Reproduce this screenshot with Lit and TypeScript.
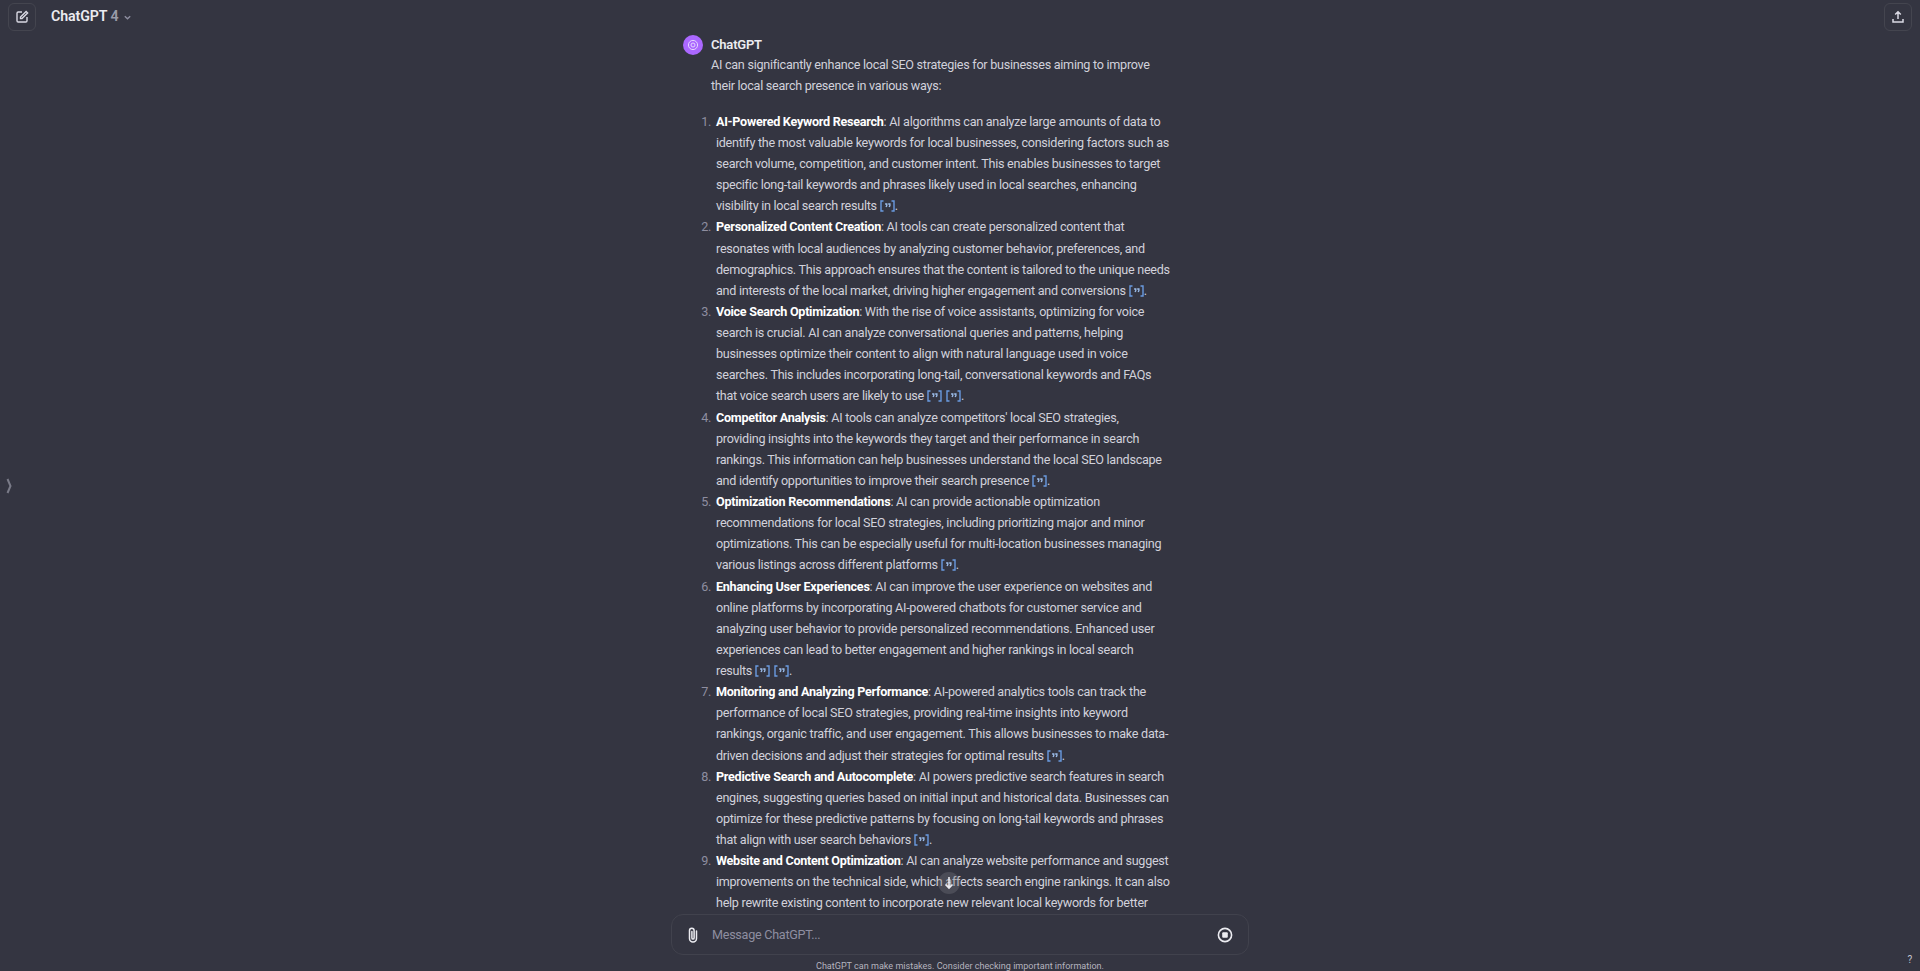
import { LitElement, html, css, svg } from "lit";
import { customElement } from "lit/decorators.js";

type Item = { title: string; first: string; lines: string[]; cites: number };

const ITEMS: Item[] = [
  { title: "AI-Powered Keyword Research", first: ": AI algorithms can analyze large amounts of data to", cites: 1, lines: [
    "identify the most valuable keywords for local businesses, considering factors such as",
    "search volume, competition, and customer intent. This enables businesses to target",
    "specific long-tail keywords and phrases likely used in local searches, enhancing",
    "visibility in local search results" ] },
  { title: "Personalized Content Creation", first: ": AI tools can create personalized content that", cites: 1, lines: [
    "resonates with local audiences by analyzing customer behavior, preferences, and",
    "demographics. This approach ensures that the content is tailored to the unique needs",
    "and interests of the local market, driving higher engagement and conversions" ] },
  { title: "Voice Search Optimization", first: ": With the rise of voice assistants, optimizing for voice", cites: 2, lines: [
    "search is crucial. AI can analyze conversational queries and patterns, helping",
    "businesses optimize their content to align with natural language used in voice",
    "searches. This includes incorporating long-tail, conversational keywords and FAQs",
    "that voice search users are likely to use" ] },
  { title: "Competitor Analysis", first: ": AI tools can analyze competitors' local SEO strategies,", cites: 1, lines: [
    "providing insights into the keywords they target and their performance in search",
    "rankings. This information can help businesses understand the local SEO landscape",
    "and identify opportunities to improve their search presence" ] },
  { title: "Optimization Recommendations", first: ": AI can provide actionable optimization", cites: 1, lines: [
    "recommendations for local SEO strategies, including prioritizing major and minor",
    "optimizations. This can be especially useful for multi-location businesses managing",
    "various listings across different platforms" ] },
  { title: "Enhancing User Experiences", first: ": AI can improve the user experience on websites and", cites: 2, lines: [
    "online platforms by incorporating AI-powered chatbots for customer service and",
    "analyzing user behavior to provide personalized recommendations. Enhanced user",
    "experiences can lead to better engagement and higher rankings in local search",
    "results" ] },
  { title: "Monitoring and Analyzing Performance", first: ": AI-powered analytics tools can track the", cites: 1, lines: [
    "performance of local SEO strategies, providing real-time insights into keyword",
    "rankings, organic traffic, and user engagement. This allows businesses to make data-",
    "driven decisions and adjust their strategies for optimal results" ] },
  { title: "Predictive Search and Autocomplete", first: ": AI powers predictive search features in search", cites: 1, lines: [
    "engines, suggesting queries based on initial input and historical data. Businesses can",
    "optimize for these predictive patterns by focusing on long-tail keywords and phrases",
    "that align with user search behaviors" ] },
  { title: "Website and Content Optimization", first: ": AI can analyze website performance and suggest", cites: 0, lines: [
    "improvements on the technical side, which affects search engine rankings. It can also",
    "help rewrite existing content to incorporate new relevant local keywords for better" ] },
];

const quote = svg`<path d="M3.5 1H1v10h2.5M11.5 1H14v10h-2.5" fill="none" stroke="#6a9be0" stroke-width="1.4"/><path d="M5.1 4h1.7v1.7l-.8 1.3M8.2 4h1.7v1.7l-.8 1.3" fill="none" stroke="#9cbdea" stroke-width="1.3"/>`;

@customElement("app-root")
export class AppRoot extends LitElement {
  static styles = css`
    :host {
      display: block;
      height: 971px;
      overflow: hidden;
      position: relative;
      background: #343541;
      color: #d1d1db;
      font-family: Roboto, "Liberation Sans", sans-serif;
      font-size: 12.6px;
      letter-spacing: -0.27px;
      line-height: 21.12px;
    }
    .page { height: 971px; display: flex; flex-direction: column; }
    .top {
      height: 34px; flex: none; display: flex; align-items: center;
      padding: 0 8px; gap: 15px;
    }
    .icon-btn {
      width: 28px; height: 28px; border: 1px solid #44454f; border-radius: 6px;
      display: flex; align-items: center; justify-content: center; box-sizing: border-box;
    }
    .brand { display: flex; align-items: center; gap: 5px; font-size: 14.2px; letter-spacing: -0.1px; font-weight: 600; color: #ececf1; flex: 1; }
    .brand b { font-weight: 600; color: #9a9ba8; }
    .scroll { flex: 1; min-height: 0; overflow: hidden; display: flex; justify-content: center; }
    .msg { width: 554px; display: flex; gap: 8px; flex: none; padding-top: 1px; }
    .avatar {
      width: 20px; height: 20px; border-radius: 50%; background: #ab68ff; flex: none;
      display: flex; align-items: center; justify-content: center;
    }
    .body { flex: 1; min-width: 0; }
    .name { font-weight: 600; color: #ececf1; font-size: 13px; letter-spacing: -0.2px; line-height: 19px; }
    .ln { display: block; white-space: nowrap; }
    .intro { margin-bottom: 14.5px; }
    ol { list-style: none; margin: 0; padding: 0 0 0 5px; }
    li { position: relative; }
    .num { position: absolute; right: 100%; margin-right: 5px; color: #8e8ea0; white-space: nowrap; }
    strong { font-weight: 700; color: #fff; }
    .cite { display: inline-block; width: 15px; height: 12px; vertical-align: -2px; margin-left: 3px; }
    .cite + .cite { margin-left: 4px; }
    .composer-wrap { flex: none; display: flex; flex-direction: column; align-items: center; }
    .composer {
      width: 578px; height: 41px; box-sizing: border-box; border: 1px solid #41424d; border-radius: 12px;
      display: flex; align-items: center; padding: 0 14px 0 11px; gap: 9px; background: #343541;
    }
    .placeholder { flex: 1; color: #8e8ea0; }
    .note { height: 16px; line-height: 22px; font-size: 9.05px; letter-spacing: 0; color: #b4b4bf; text-align: center; }
    .handle { position: absolute; left: 6px; top: 478px; }
    .help { position: absolute; right: 8px; top: 953px; font-size: 10px; line-height: 14px; color: #c5c5d2; }
    .scrolldown {
      position: absolute; left: 938px; top: 872px; width: 22px; height: 22px; border-radius: 50%;
      background: rgba(120,120,130,.35); display: flex; align-items: center; justify-content: center;
    }
  `;

  private cites(n: number) {
    if (!n) return "";
    const icons = [];
    for (let i = 0; i < n; i++) icons.push(html`<svg class="cite" viewBox="0 0 15 12">${quote}</svg>`);
    return html`${icons}.`;
  }

  render() {
    return html`
      <div class="page">
        <header class="top">
          <div class="icon-btn">
            <svg width="16" height="16" viewBox="0 0 16 16" fill="none" stroke="#d9d9e3" stroke-width="1.4">
              <path d="M8 3H4.2C3.5 3 3 3.5 3 4.2v7.6c0 .7.5 1.2 1.2 1.2h7.6c.7 0 1.2-.5 1.2-1.2V8"/>
              <path d="M6.5 9.5V8l5.6-5.6 1.5 1.5L8 9.5z"/>
            </svg>
          </div>
          <div class="brand">
            <span>ChatGPT <b>4</b></span>
            <svg width="9" height="9" viewBox="0 0 10 10" fill="none" stroke="#8e8ea0" stroke-width="1.5"><path d="M2 3.5l3 3 3-3"/></svg>
          </div>
          <div class="icon-btn">
            <svg width="16" height="16" viewBox="0 0 16 16" fill="none" stroke="#d9d9e3" stroke-width="1.5">
              <path d="M8 10V3M5.2 5.5L8 2.7l2.8 2.8M3 10v3h10v-3"/>
            </svg>
          </div>
        </header>
        <main class="scroll">
          <div class="msg">
            <div class="avatar">
              <svg width="12" height="12" viewBox="0 0 12 12" fill="none" stroke="#e6d3ff" stroke-width="1"><circle cx="6" cy="6" r="4.6"/><circle cx="6" cy="6" r="2"/></svg>
            </div>
            <div class="body">
              <div class="name">ChatGPT</div>
              <div class="intro">
                <span class="ln">AI can significantly enhance local SEO strategies for businesses aiming to improve</span>
                <span class="ln">their local search presence in various ways:</span>
              </div>
              <ol>
                ${ITEMS.map((it, i) => html`<li>
                  <span class="num">${i + 1}.</span>
                  <span class="ln"><strong>${it.title}</strong>${it.first}</span>
                  ${it.lines.map((l, j) => html`<span class="ln">${l}${j === it.lines.length - 1 ? this.cites(it.cites) : ""}</span>`)}
                </li>`)}
              </ol>
            </div>
          </div>
        </main>
        <div class="composer-wrap">
          <div class="composer">
            <svg width="20" height="20" viewBox="0 0 20 20" fill="none" stroke="#ececf1" stroke-width="1.5" stroke-linecap="round">
              <path d="M13.5 6v7.5a3.5 3.5 0 0 1-7 0V5.5a2.3 2.3 0 0 1 4.6 0V13a1.1 1.1 0 0 1-2.2 0V6.5"/>
            </svg>
            <div class="placeholder">Message ChatGPT...</div>
            <svg width="18" height="18" viewBox="0 0 18 18">
              <circle cx="9" cy="9" r="6.6" fill="none" stroke="#ececf1" stroke-width="1.6"/>
              <rect x="6.2" y="6.2" width="5.6" height="5.6" rx="1" fill="#ececf1"/>
            </svg>
          </div>
          <div class="note">ChatGPT can make mistakes. Consider checking important information.</div>
        </div>
      </div>
      <div class="scrolldown">
        <svg width="12" height="14" viewBox="0 0 12 14" fill="none" stroke="#ececf1" stroke-width="1.6"><path d="M6 1v11M2.5 8.5L6 12l3.5-3.5"/></svg>
      </div>
      <svg class="handle" width="6" height="16" viewBox="0 0 6 16" fill="none" stroke="#7a7b88" stroke-width="2"><path d="M1.5 1l3 7-3 7"/></svg>
      <div class="help">?</div>
    `;
  }
}
